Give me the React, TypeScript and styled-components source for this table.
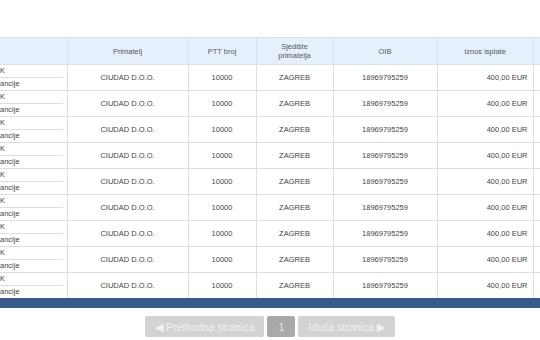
import { createGlobalStyle, styled } from 'styled-components';

const GlobalStyle = createGlobalStyle`
  html, body {
    margin: 0;
    padding: 0;
    background: #ffffff;
    font-family: 'Liberation Sans', Arial, sans-serif;
  }
`;

const ROWS = Array.from({ length: 9 }, function () {
  return {
    primatelj: 'CIUDAD D.O.O.',
    ptt: '10000',
    sjediste: 'ZAGREB',
    oib: '18969795259',
    iznos: '400,00 EUR',
  };
});

const COLUMNS = [67, 121, 68, 77, 104, 96, 30];

function App() {
  return (
    <Styled.Page>
      <GlobalStyle />
      <Styled.Scroller>
        <Styled.Table>
          <colgroup>
            {COLUMNS.map(function (w, i) {
              return <col key={i} style={{ width: w }} />;
            })}
          </colgroup>
          <thead>
            <tr>
              <Styled.Th />
              <Styled.Th>Primatelj</Styled.Th>
              <Styled.Th>PTT broj</Styled.Th>
              <Styled.Th>
                Sjedište
                <br />
                primatelja
              </Styled.Th>
              <Styled.Th>OIB</Styled.Th>
              <Styled.Th>Iznos isplate</Styled.Th>
              <Styled.Th />
            </tr>
          </thead>
          <tbody>
            {ROWS.map(function (row, i) {
              return (
                <tr key={i}>
                  <Styled.StackCell>
                    <Styled.SubLine>K</Styled.SubLine>
                    <Styled.SubLine $last>ancije</Styled.SubLine>
                  </Styled.StackCell>
                  <Styled.Td>{row.primatelj}</Styled.Td>
                  <Styled.Td>{row.ptt}</Styled.Td>
                  <Styled.Td>{row.sjediste}</Styled.Td>
                  <Styled.Td>{row.oib}</Styled.Td>
                  <Styled.Td $align="right">{row.iznos}</Styled.Td>
                  <Styled.Td />
                </tr>
              );
            })}
          </tbody>
        </Styled.Table>
      </Styled.Scroller>
      <Styled.Footer />
      <Styled.Pager>
        <Styled.PageButton disabled>◀ Prethodna stranica</Styled.PageButton>
        <Styled.PageButton $current>1</Styled.PageButton>
        <Styled.PageButton disabled>Iduća stranica ▶</Styled.PageButton>
      </Styled.Pager>
    </Styled.Page>
  );
}

export default App;

const Styled = {
  Page: styled.div`
    width: 540px;
    height: 340px;
    padding-top: 37px;
    box-sizing: border-box;
    overflow: hidden;
  `,
  Scroller: styled.div`
    width: 540px;
    overflow: hidden;
  `,
  Table: styled.table`
    table-layout: fixed;
    width: 563px;
    border-collapse: collapse;
    font-size: 7.5px;
    color: #454545;
  `,
  Th: styled.th`
    height: 27px;
    padding: 0 4px;
    box-sizing: border-box;
    background: #e5f0fc;
    border: 1px solid #d9e2ec;
    border-top: 1px solid #d6e1ec;
    font-weight: 400;
    color: #585858;
    text-align: center;
    vertical-align: middle;
    line-height: 9px;
    &:first-child {
      border-left: none;
    }
  `,
  Td: styled.td<{ $align?: 'right' }>`
    height: 26px;
    padding: 0 5px;
    box-sizing: border-box;
    border: 1px solid #dedede;
    text-align: ${(p) => p.$align ?? 'center'};
    vertical-align: middle;
    white-space: nowrap;
  `,
  StackCell: styled.td`
    height: 26px;
    padding: 0 4px 0 0;
    box-sizing: border-box;
    border: 1px solid #dedede;
    border-left: none;
    vertical-align: middle;
  `,
  SubLine: styled.div<{ $last?: boolean }>`
    height: 12px;
    line-height: 12px;
    white-space: nowrap;
    border-bottom: ${(p) => (p.$last ? 'none' : '1px solid #dedede')};
  `,
  Footer: styled.div`
    height: 10px;
    margin-top: -1px;
    background: #3a5a8a;
  `,
  Pager: styled.div`
    display: flex;
    justify-content: center;
    gap: 3px;
    margin-top: 8px;
  `,
  PageButton: styled.button<{ $current?: boolean }>`
    height: 21px;
    padding: 0 10px;
    border: none;
    border-radius: 2px;
    font-family: 'Liberation Sans', Arial, sans-serif;
    font-size: 10.5px;
    color: ${(p) => (p.$current ? '#e8e8e8' : '#f2f2f2')};
    background: ${(p) => (p.$current ? '#a9a9a9' : '#d3d3d3')};
    min-width: ${(p) => (p.$current ? '28px' : 'auto')};
  `,
};
